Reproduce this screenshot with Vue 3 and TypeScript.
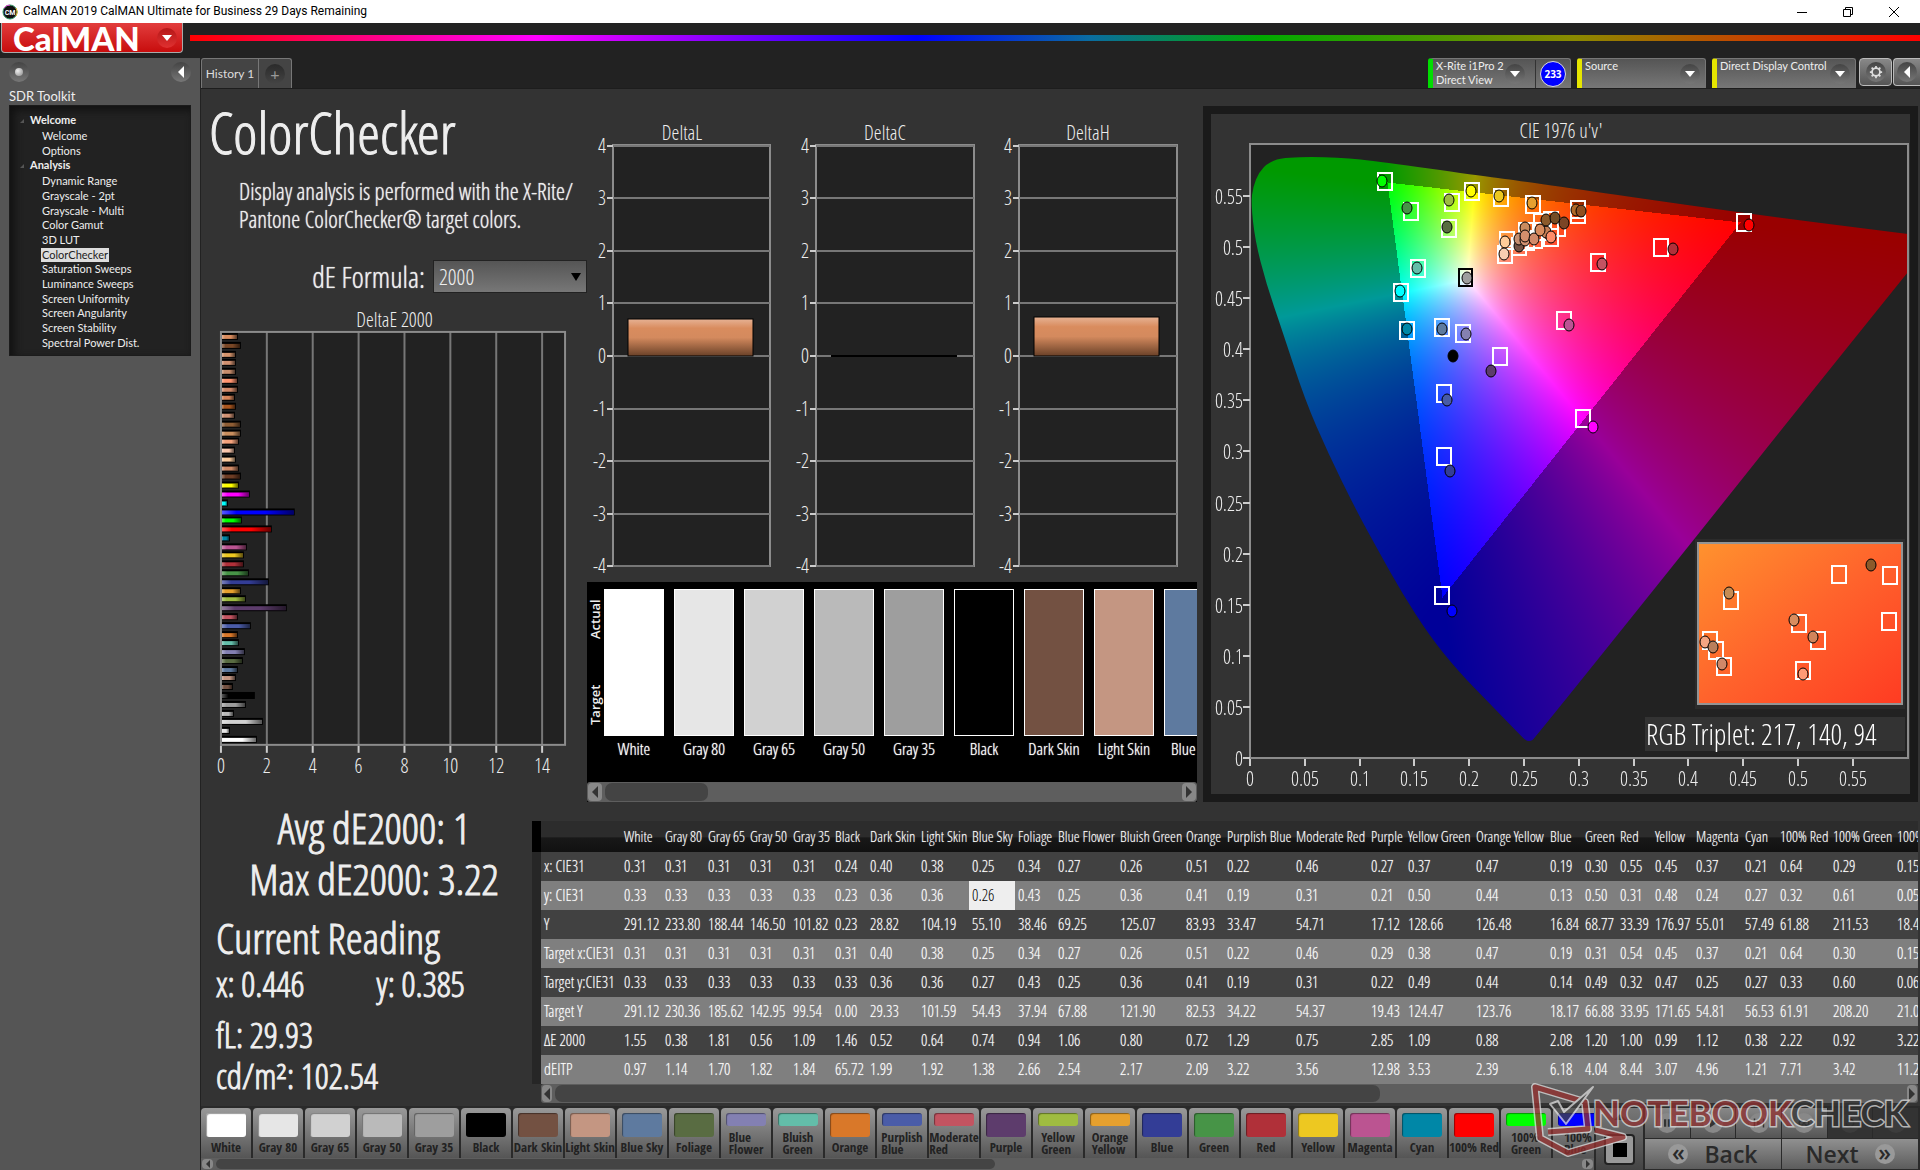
<script setup lang="ts">
import { onMounted, ref } from 'vue'

interface Patch { name: string; color: string }
interface Node { name: string; active?: boolean }
type Point = [number, number]
type Dot = [number, number, string]

const tree: { title: string; items: Node[] }[] = [
  { title: 'Welcome', items: [{ name: 'Welcome' }, { name: 'Options' }] },
  {
    title: 'Analysis',
    items: [
      { name: 'Dynamic Range' }, { name: 'Grayscale - 2pt' }, { name: 'Grayscale - Multi' }, { name: 'Color Gamut' },
      { name: '3D LUT' }, { name: 'ColorChecker', active: true }, { name: 'Saturation Sweeps' }, { name: 'Luminance Sweeps' },
      { name: 'Screen Uniformity' }, { name: 'Screen Angularity' }, { name: 'Screen Stability' }, { name: 'Spectral Power Dist.' },
    ],
  },
]

const patches: Patch[] = [
  { name: 'White', color: '#ffffff' }, { name: 'Gray 80', color: '#e6e6e6' }, { name: 'Gray 65', color: '#d1d1d1' },
  { name: 'Gray 50', color: '#bababa' }, { name: 'Gray 35', color: '#9e9e9e' }, { name: 'Black', color: '#000000' },
  { name: 'Dark Skin', color: '#735142' }, { name: 'Light Skin', color: '#c49682' }, { name: 'Blue Sky', color: '#5e7a9f' },
  { name: 'Foliage', color: '#596c42' }, { name: 'Blue Flower', color: '#8380b2' }, { name: 'Bluish Green', color: '#63bda9' },
  { name: 'Orange', color: '#d97829' }, { name: 'Purplish Blue', color: '#4a5ca8' }, { name: 'Moderate Red', color: '#c35461' },
  { name: 'Purple', color: '#5d3c6c' }, { name: 'Yellow Green', color: '#9fbc41' }, { name: 'Orange Yellow', color: '#e6a02e' },
  { name: 'Blue', color: '#333d96' }, { name: 'Green', color: '#479447' }, { name: 'Red', color: '#b03039' },
  { name: 'Yellow', color: '#edc821' }, { name: 'Magenta', color: '#bb5491' }, { name: 'Cyan', color: '#0087a7' },
  { name: '100% Red', color: '#ff0000' }, { name: '100% Green', color: '#00ff00' }, { name: '100% Blue', color: '#0000ff' },
]
const twoLine = new Set(['Blue Flower', 'Bluish Green', 'Purplish Blue', 'Moderate Red', 'Yellow Green', 'Orange Yellow', '100% Green', '100% Blue'])

const colWidths = [41, 43, 42, 43, 42, 35, 51, 51, 46, 40, 62, 66, 41, 69, 75, 37, 68, 74, 35, 35, 35, 41, 49, 35, 53, 64, 60]
const rows = [
  ['x: CIE31', '0.31 0.31 0.31 0.31 0.31 0.24 0.40 0.38 0.25 0.34 0.27 0.26 0.51 0.22 0.46 0.27 0.37 0.47 0.19 0.30 0.55 0.45 0.37 0.21 0.64 0.29 0.15'],
  ['y: CIE31', '0.33 0.33 0.33 0.33 0.33 0.23 0.36 0.36 0.26 0.43 0.25 0.36 0.41 0.19 0.31 0.21 0.50 0.44 0.13 0.50 0.31 0.48 0.24 0.27 0.32 0.61 0.05'],
  ['Y', '291.12 233.80 188.44 146.50 101.82 0.23 28.82 104.19 55.10 38.46 69.25 125.07 83.93 33.47 54.71 17.12 128.66 126.48 16.84 68.77 33.39 176.97 55.01 57.49 61.88 211.53 18.4'],
  ['Target x:CIE31', '0.31 0.31 0.31 0.31 0.31 0.31 0.40 0.38 0.25 0.34 0.27 0.26 0.51 0.22 0.46 0.29 0.38 0.47 0.19 0.31 0.54 0.45 0.37 0.21 0.64 0.30 0.15'],
  ['Target y:CIE31', '0.33 0.33 0.33 0.33 0.33 0.33 0.36 0.36 0.27 0.43 0.25 0.36 0.41 0.19 0.31 0.22 0.49 0.44 0.14 0.49 0.32 0.47 0.25 0.27 0.33 0.60 0.06'],
  ['Target Y', '291.12 230.36 185.62 142.95 99.54 0.00 29.33 101.59 54.43 37.94 67.88 121.90 82.53 34.22 54.37 19.43 124.47 123.76 18.17 66.88 33.95 171.65 54.81 56.53 61.91 208.20 21.0'],
  ['ΔE 2000', '1.55 0.38 1.81 0.56 1.09 1.46 0.52 0.64 0.74 0.94 1.06 0.80 0.72 1.29 0.75 2.85 1.09 0.88 2.08 1.20 1.00 0.99 1.12 0.38 2.22 0.92 3.22'],
  ['dEITP', '0.97 1.14 1.70 1.82 1.84 65.72 1.99 1.92 1.38 2.66 2.54 2.17 2.09 3.22 3.56 12.98 3.53 2.39 6.18 4.04 8.44 3.07 4.96 1.21 7.71 3.42 11.2'],
].map(([label, values]) => ({ label, values: values.split(' ') }))

const skinBars: [string, number][] = [
  ['#d98c5e', 0.74], ['#7a4726', 0.87], ['#d5946c', 0.65], ['#d09070', 0.65], ['#c68c6c', 0.65], ['#ff9470', 0.74],
  ['#d28a6a', 0.74], ['#d6855a', 0.61], ['#a8551e', 0.65], ['#d09274', 0.61], ['#8f5d34', 0.87], ['#c98e5e', 0.87],
  ['#f4a27c', 0.78], ['#f9c6ac', 0.61], ['#fbcb9d', 0.65], ['#cf8a66', 0.78], ['#6e3d24', 0.87],
  ['#ffff00', 0.78], ['#ff00ff', 1.26], ['#00ffff', 0.3],
]
const deBars = [
  ...skinBars,
  ...patches.map((p, i): [string, number] => [p.color, Number(rows[6].values[i])]).reverse(),
].map(([color, value], i) => ({ color, y: Math.round(30 + i * 8.78), w: Math.round(value * 23) }))

const deltas = [
  { name: 'DeltaL', x: 26, w: 157, value: 0.71 },
  { name: 'DeltaC', x: 229, w: 158, value: 0 },
  { name: 'DeltaH', x: 432, w: 158, value: 0.75 },
]
const levels = [4, 3, 2, 1, 0, -1, -2, -3, -4]
const levelY = (v: number) => Math.round(234 - v * 52.6)

const uTicks = ['0', '0.05', '0.1', '0.15', '0.2', '0.25', '0.3', '0.35', '0.4', '0.45', '0.5', '0.55']
const tickX = (i: number) => Math.round(1250 + i * 54.8)
const tickY = (i: number) => Math.round(758 - i * 51.1)

const targets: Point[] = [
  [1385, 181], [1411, 211], [1452, 202], [1472, 191], [1501, 197], [1533, 204], [1578, 209], [1578, 214], [1744, 222],
  [1449, 228], [1418, 268], [1401, 292], [1407, 330], [1442, 327], [1463, 333], [1661, 247], [1598, 262], [1564, 320],
  [1500, 356], [1444, 393], [1583, 418], [1444, 456], [1442, 595], [1507, 240], [1505, 254], [1526, 231], [1519, 246],
  [1541, 222], [1551, 220], [1558, 227], [1535, 239], [1551, 237], [1527, 241], [1542, 231],
]
const readings: Dot[] = [
  [1382, 181, '#00ff00'], [1407, 208, '#469346'], [1449, 200, '#9dbc40'], [1471, 191, '#ffff00'], [1499, 196, '#ecc820'],
  [1532, 203, '#e6a02f'], [1576, 210, '#b06a28'], [1581, 211, '#8f5020'], [1749, 225, '#ff0000'], [1447, 227, '#586c41'],
  [1417, 268, '#64bea9'], [1400, 291, '#00ffff'], [1467, 278, '#9e9e9e'], [1407, 329, '#0088a8'], [1442, 329, '#5e7b9e'],
  [1466, 334, '#8580b1'], [1453, 356, '#000000'], [1491, 371, '#5d3c6c'], [1673, 249, '#b03039'], [1602, 264, '#c35362'],
  [1569, 325, '#bb5494'], [1447, 400, '#485ba7'], [1593, 427, '#ff00ff'], [1450, 471, '#343d96'], [1452, 611, '#0000ff'],
  [1505, 242, '#ffcc99'], [1504, 254, '#f9ceb0'], [1525, 228, '#c98b5e'], [1519, 246, '#735244'], [1519, 239, '#c68f70'],
  [1525, 240, '#d09070'], [1525, 236, '#d58f6c'], [1534, 239, '#d28a6a'], [1546, 232, '#c67f55'], [1540, 230, '#d98c5e'],
  [1551, 237, '#ff8c69'], [1546, 220, '#8b5a2b'], [1555, 218, '#734d26'], [1564, 223, '#7b4526'],
]
const insetTargets: Point[] = [
  [1839, 574], [1890, 575], [1731, 600], [1799, 623], [1889, 621], [1710, 640], [1818, 640], [1716, 650], [1724, 666], [1803, 670],
]
const insetReadings: Dot[] = [
  [1871, 565, '#8b5a2b'], [1729, 593, '#c68c53'], [1794, 620, '#d98c5e'], [1705, 642, '#f4a582'],
  [1813, 637, '#d2845b'], [1713, 647, '#b97f5c'], [1722, 664, '#d08868'], [1803, 674, '#ff9a76'],
]

/* Spectral locus outline, relative to the plot's top left corner */
const locus: Point[] = [
  [88, 13], [133, 18], [225, 31], [271, 37], [492, 69], [658, 90], [658, 128], [555, 256], [446, 393], [284, 595],
  [281, 597], [277, 597], [273, 594], [244, 564], [207, 526], [179, 491], [152, 449], [129, 408], [106, 366], [78, 309],
  [55, 256], [32, 186], [16, 139], [5, 96], [1, 59], [3, 43], [9, 28], [19, 18], [35, 13],
]

const plot = ref<HTMLCanvasElement | null>(null)

function side(p: Point, a: Point, b: Point): number {
  return (p[0] - b[0]) * (a[1] - b[1]) - (a[0] - b[0]) * (p[1] - b[1])
}

onMounted(() => {
  const canvas = plot.value
  const ctx = canvas?.getContext('2d')
  if (!canvas || !ctx) return
  const { width, height } = canvas
  const layer = document.createElement('canvas')
  layer.width = width
  layer.height = height
  const layerCtx = layer.getContext('2d')
  if (!layerCtx) return
  const image = layerCtx.createImageData(width, height)
  const red: Point = [490, 78]
  const green: Point = [137, 38]
  const blue: Point = [192, 453]
  for (let py = 0; py < height; py++) {
    for (let px = 0; px < width; px++) {
      const u = px / 1096
      const v = Math.max((614 - py) / 1022, 0.001)
      const X = (9 * u) / (4 * v)
      const Z = (12 - 3 * u - 20 * v) / (4 * v)
      const r = Math.max(0, 3.2406 * X - 1.5372 - 0.4986 * Z)
      const g = Math.max(0, -0.9689 * X + 1.8758 + 0.0415 * Z)
      const b = Math.max(0, 0.0557 * X - 0.204 + 1.057 * Z)
      const top = Math.max(r, g, b, 0.0001)
      const p: Point = [px, py]
      const s1 = side(p, red, green)
      const s2 = side(p, green, blue)
      const s3 = side(p, blue, red)
      const inside = (s1 <= 0 && s2 <= 0 && s3 <= 0) || (s1 >= 0 && s2 >= 0 && s3 >= 0)
      const k = (inside ? 255 : 153) / top
      const at = (py * width + px) * 4
      image.data[at] = r * k
      image.data[at + 1] = g * k
      image.data[at + 2] = b * k
      image.data[at + 3] = 255
    }
  }
  layerCtx.putImageData(image, 0, 0)
  ctx.beginPath()
  const n = locus.length
  ctx.moveTo((locus[n - 1][0] + locus[0][0]) / 2, 13)
  locus.forEach((p, i) => {
    const next = locus[(i + 1) % n]
    if (p[0] > 600) ctx.lineTo(p[0], p[1])
    else ctx.quadraticCurveTo(p[0], p[1], (p[0] + next[0]) / 2, (p[1] + next[1]) / 2)
  })
  ctx.closePath()
  ctx.clip()
  ctx.drawImage(layer, 0, 0)
})
</script>

<template>
  <div class="app">
    <header class="titlebar">
      <svg class="app-icon" viewBox="0 0 16 16" aria-hidden="true">
        <circle cx="8" cy="8" r="7" fill="#111" stroke="#3a9b6b" />
        <path d="M2 4a7 7 0 0 1 6-3" stroke="#e04ad0" fill="none" /><path d="M14 4a7 7 0 0 1 0 8" stroke="#e0b030" fill="none" />
        <text x="8" y="11" text-anchor="middle" font-size="7" font-weight="700" fill="#fff">CM</text>
      </svg>
      <span class="title">CalMAN 2019 CalMAN Ultimate for Business 29 Days Remaining</span>
      <div class="window-buttons">
        <button aria-label="Minimize"><svg viewBox="0 0 12 12"><path d="M1 6.5h10" /></svg></button>
        <button aria-label="Restore"><svg viewBox="0 0 12 12"><path d="M1.500 3.500h7v7h-7zM3.500 3.500v-2h7v7h-2" /></svg></button>
        <button aria-label="Close"><svg viewBox="0 0 12 12"><path d="M1 1l10 10M11 1L1 11" /></svg></button>
      </div>
    </header>

    <div class="brandbar">
      <button class="brand">CalMAN<span class="knob red"><svg viewBox="0 0 10 6"><path d="M0 0h10L5 6z" /></svg></span></button>
      <div class="rainbow"></div>
    </div>

    <div class="body">
      <aside class="sidebar">
        <div class="side-top">
          <span class="knob"><i class="ball"></i></span>
          <button class="knob" aria-label="Collapse"><svg class="left" viewBox="0 0 6 12"><path d="M6 0v12L0 6z" /></svg></button>
        </div>
        <h2>SDR Toolkit</h2>
        <nav class="tree">
          <section v-for="group in tree" :key="group.title">
            <h3>{{ group.title }}</h3>
            <ul>
              <li v-for="item in group.items" :key="item.name"><a href="#" :class="{ active: item.active }">{{ item.name }}</a></li>
            </ul>
          </section>
        </nav>
      </aside>

      <main class="main">
        <div class="tabbar">
          <button class="tab">History 1</button>
          <button class="tab add" aria-label="Add tab"><span class="knob dark">+</span></button>
          <div class="devices">
            <div class="device meter">
              <span class="device-name">X-Rite i1Pro 2<br>Direct View</span>
              <button class="knob" aria-label="Meter menu"><svg viewBox="0 0 10 6"><path d="M0 0h10L5 6z" /></svg></button>
              <span class="count"><b>233</b></span>
            </div>
            <div class="device source">
              <span class="device-name">Source</span>
              <button class="knob" aria-label="Source menu"><svg viewBox="0 0 10 6"><path d="M0 0h10L5 6z" /></svg></button>
            </div>
            <div class="device display">
              <span class="device-name">Direct Display Control</span>
              <button class="knob" aria-label="Display menu"><svg viewBox="0 0 10 6"><path d="M0 0h10L5 6z" /></svg></button>
            </div>
            <button class="square" aria-label="Settings">
              <span class="knob"><svg class="gear" viewBox="0 0 16 16"><circle cx="8" cy="8" r="4.500" /><path d="M8 1v2.500M8 12.500V15M1 8h2.500M12.500 8H15M3 3l2 2M11 11l2 2M13 3l-2 2M5 11l-2 2" /></svg></span>
            </button>
            <button class="square last" aria-label="Hide"><span class="knob"><svg class="left" viewBox="0 0 6 12"><path d="M6 0v12L0 6z" /></svg></span></button>
          </div>
        </div>

        <div class="workspace">
          <div class="upper">
            <section class="intro">
              <h1>ColorChecker</h1>
              <p>Display analysis is performed with the X-Rite/<br>Pantone ColorChecker® target colors.</p>
              <div class="formula">
                <label for="formula">dE Formula:</label>
                <select id="formula"><option>2000</option></select>
              </div>
              <svg class="chart" viewBox="0 0 387 476" role="img" aria-label="DeltaE 2000">
                <defs>
                  <linearGradient id="shine">
                    <stop offset="0" stop-color="#fff" stop-opacity=".35" /><stop offset=".2" stop-color="#fff" stop-opacity="0" />
                    <stop offset=".6" stop-color="#000" stop-opacity="0" /><stop offset="1" stop-color="#000" stop-opacity=".6" />
                  </linearGradient>
                </defs>
                <text x="194" y="23" class="axis mid">DeltaE 2000</text>
                <rect x="20" y="28" width="345" height="414" fill="#222" />
                <path v-for="i in 7" :key="i" :d="`M${20 + i * 46} 28v414`" class="grid" />
                <g v-for="(bar, i) in deBars" :key="i">
                  <rect x="20" :y="bar.y - 1" :width="bar.w" height="7" fill="#000" />
                  <rect x="21" :y="bar.y + 1" :width="Math.max(bar.w - 2, 1)" height="4" :fill="bar.color" />
                  <rect x="21" :y="bar.y + 1" :width="Math.max(bar.w - 2, 1)" height="4" fill="url(#shine)" />
                </g>
                <rect x="20" y="28" width="345" height="414" class="frame" />
                <g v-for="i in 8" :key="i">
                  <path :d="`M${20 + (i - 1) * 46} 443v7`" class="tick" />
                  <text :x="20 + (i - 1) * 46" y="470" class="axis mid">{{ (i - 1) * 2 }}</text>
                </g>
              </svg>
            </section>

            <section class="center">
              <svg class="chart" viewBox="0 0 610 455" role="img" aria-label="DeltaL, DeltaC and DeltaH">
                <defs>
                  <linearGradient id="skin" x2="0" y2="1">
                    <stop offset="0" stop-color="#e6b294" /><stop offset=".25" stop-color="#d98c5e" />
                    <stop offset=".5" stop-color="#d48a5e" /><stop offset="1" stop-color="#6a4128" />
                  </linearGradient>
                </defs>
                <g v-for="d in deltas" :key="d.name">
                  <text :x="d.x + 69" y="18" class="axis mid">{{ d.name }}</text>
                  <rect :x="d.x" y="23" :width="d.w" height="421" class="frame filled" />
                  <g v-for="v in levels" :key="v">
                    <path :d="`M${d.x} ${levelY(v)}h${d.w}`" class="grid" />
                    <path :d="`M${d.x - 6} ${levelY(v)}h6`" class="tick" />
                    <text :x="d.x - 7" :y="levelY(v) + 7" class="axis end">{{ v }}</text>
                  </g>
                  <rect v-if="d.value" :x="d.x + 15" :y="levelY(d.value)" width="125" :height="234 - levelY(d.value)" fill="url(#skin)" stroke="#000" />
                  <path v-else :d="`M${d.x + 15} 234h126`" stroke="#000" stroke-width="2" />
                </g>
              </svg>
              <div class="strip">
                <div class="strip-body">
                  <div class="strip-labels"><span>Actual</span><span>Target</span></div>
                  <figure v-for="p in patches.slice(0, 9)" :key="p.name">
                    <div class="tile" :style="{ backgroundColor: p.color }"></div>
                    <figcaption>{{ p.name }}</figcaption>
                  </figure>
                </div>
                <div class="scroll">
                  <button aria-label="Scroll left"><svg viewBox="0 0 6 12"><path d="M6 0v12L0 6z" /></svg></button>
                  <span class="thumb strip-thumb"></span>
                  <button aria-label="Scroll right"><svg viewBox="0 0 6 12"><path d="M0 0v12l6-6z" /></svg></button>
                </div>
              </div>
            </section>

            <section class="cie">
              <svg class="chart" viewBox="1211 114 699 680" role="img" aria-label="CIE 1976 u'v'">
                <defs>
                  <linearGradient id="zoomed" x2="1" y2="1">
                    <stop offset="0" stop-color="#ff922e" /><stop offset=".5" stop-color="#ff632c" /><stop offset="1" stop-color="#ff3b22" />
                  </linearGradient>
                </defs>
                <text x="1561" y="138" class="axis mid">CIE 1976 u'v'</text>
                <rect x="1250" y="144" width="658" height="614" fill="#222" />
                <foreignObject x="1250" y="144" width="658" height="614"><canvas ref="plot" width="658" height="614"></canvas></foreignObject>
                <rect x="1250" y="144" width="658" height="614" class="frame" />
                <g v-for="(t, i) in uTicks" :key="t">
                  <path :d="`M${tickX(i)} 759v7M1243 ${tickY(i)}h7`" class="tick" />
                  <text :x="tickX(i)" y="786" class="axis mid">{{ t }}</text>
                  <text x="1243" :y="tickY(i) + 8" class="axis end">{{ t }}</text>
                </g>
                <rect v-for="(t, i) in targets" :key="'t' + i" :x="t[0] - 7" :y="t[1] - 8" width="14" height="17" class="target" />
                <rect x="1459" y="269" width="13" height="17" class="target white-point" />
                <ellipse v-for="(r, i) in readings" :key="'r' + i" :cx="r[0]" :cy="r[1]" rx="5" ry="6" :fill="r[2]" class="reading" />
                <rect x="1695" y="539" width="210" height="170" fill="#2b2b2b" />
                <rect x="1698" y="543" width="204" height="161" fill="url(#zoomed)" stroke="#949494" stroke-width="2" />
                <rect v-for="(t, i) in insetTargets" :key="'it' + i" :x="t[0] - 7" :y="t[1] - 8" width="14" height="17" class="target" />
                <ellipse v-for="(r, i) in insetReadings" :key="'ir' + i" :cx="r[0]" :cy="r[1]" rx="5" ry="6" :fill="r[2]" class="reading" />
                <rect x="1645" y="717" width="260" height="34" fill="#333" />
                <text x="1646" y="745" class="triplet">RGB Triplet: 217, 140, 94</text>
              </svg>
            </section>
          </div>

          <div class="lower">
            <section class="stats">
              <div class="big center-text">Avg dE2000: 1</div>
              <div class="big center-text">Max dE2000: 3.22</div>
              <div class="big current">Current Reading</div>
              <div class="med pair"><span>x: 0.446</span><span>y: 0.385</span></div>
              <div class="med fl">fL: 29.93</div>
              <div class="med">cd/m²: 102.54</div>
            </section>
            <section class="data">
              <div class="table-wrap">
                <table>
                  <colgroup>
                    <col class="gutter-col"><col class="label-col">
                    <col v-for="(w, i) in colWidths" :key="i" :style="{ width: w + 'px' }">
                  </colgroup>
                  <thead>
                    <tr><th class="gutter"></th><th></th><th v-for="p in patches" :key="p.name" scope="col">{{ p.name }}</th></tr>
                  </thead>
                  <tbody>
                    <tr v-for="(row, ri) in rows" :key="row.label">
                      <td class="gutter"></td>
                      <th scope="row">{{ row.label }}</th>
                      <td v-for="(v, ci) in row.values" :key="ci" :class="{ selected: ri === 1 && ci === 8 }">{{ v }}</td>
                    </tr>
                  </tbody>
                </table>
              </div>
              <div class="scroll table-scroll">
                <button aria-label="Scroll left"><svg viewBox="0 0 6 12"><path d="M6 0v12L0 6z" /></svg></button>
                <span class="thumb table-thumb"></span>
                <button aria-label="Scroll right"><svg viewBox="0 0 6 12"><path d="M0 0v12l6-6z" /></svg></button>
              </div>
            </section>
          </div>
        </div>

        <footer class="dock">
          <div class="palette">
            <div class="palette-row">
              <button v-for="p in patches" :key="p.name" class="patch">
                <span class="chip" :style="{ backgroundColor: p.color }"></span>
                <span class="patch-name" :class="{ two: twoLine.has(p.name) }">{{ p.name }}</span>
              </button>
            </div>
            <div class="scroll thin">
              <button aria-label="Scroll left"><svg viewBox="0 0 6 12"><path d="M6 0v12L0 6z" /></svg></button>
              <span class="thumb palette-thumb"></span>
              <button aria-label="Scroll right"><svg viewBox="0 0 6 12"><path d="M0 0v12l6-6z" /></svg></button>
            </div>
          </div>
          <div class="stop-cell">
            <svg class="up" viewBox="0 0 12 6"><path d="M0 6h12L6 0z" /></svg>
            <button class="stop" aria-label="Stop"><i></i></button>
          </div>
          <div class="controls">
            <div class="transport">
              <button aria-label="Pause"><span><svg viewBox="0 0 16 16"><path d="M4 3h3v10H4zM9 3h3v10H9z" /></svg></span></button>
              <button aria-label="Play"><span><svg viewBox="0 0 16 16"><path d="M4 2l9 6-9 6z" /></svg></span></button>
              <button aria-label="Read series"><span><svg viewBox="0 0 16 16"><path d="M1 2h2v12H1zM13 2h2v12h-2zM5 4l6 4-6 4z" /></svg></span></button>
              <button aria-label="Read continuously"><span><svg viewBox="0 0 16 16"><path d="M4.500 5a3 3 0 1 0 0 6c2.500 0 4.500-6 7-6a3 3 0 1 1 0 6c-2.500 0-4.500-6-7-6z" fill="none" stroke="#333" stroke-width="2" /></svg></span></button>
              <button class="off" aria-label="Refresh"><span><svg viewBox="0 0 16 16"><path d="M3 8a5 5 0 1 0 2-4" fill="none" stroke="#222" stroke-width="2" /></svg></span></button>
              <button class="off" aria-label="Record"><span></span></button>
            </div>
            <div class="steps">
              <button><span class="chev">«</span>Back</button>
              <button>Next<span class="chev">»</span></button>
            </div>
          </div>
          <svg class="watermark" viewBox="0 0 385 80" aria-label="NotebookCheck">
            <g fill="none" stroke-linejoin="round">
              <path d="M15 50l40-3-3-27L2 5l5 51 28 15 55-16-28-7" stroke="#ddd" stroke-width="8" />
              <path d="M15 50l40-3-3-27L2 5l5 51 28 15 55-16-28-7" stroke="#96302f" stroke-width="5" />
              <path d="M17 22l8-3 6 11L60 5 33 42z" fill="#444" stroke="#ddd" stroke-width="2" />
            </g>
            <text x="60" y="44"><tspan fill="#8f3030">NOTEBOOK</tspan><tspan fill="#333">CHECK</tspan></text>
          </svg>
        </footer>
      </main>
    </div>
  </div>
</template>

<style>
body { margin: 0; background: #333; }
</style>

<style scoped>
.app {
  --narrow: "Open Sans Condensed Light", "Open Sans Condensed", "Open Sans", sans-serif;
  --ui: "Lato", sans-serif;
  display: flex;
  flex-direction: column;
  min-height: 100vh;
  overflow: hidden;
  background: #222;
  color: #eee;
  font-family: var(--ui);
  font-size: 13px;
}
.app *, .app *::before { box-sizing: border-box; }
button { margin: 0; padding: 0; border: 0; background: none; color: inherit; font: inherit; }
h1, h2, h3, p, ul, figure { margin: 0; padding: 0; font-weight: 400; list-style: none; }

.titlebar { display: flex; align-items: center; height: 23px; padding-left: 2px; background: #fff; color: #000; font: 12px/23px "Roboto", "Noto Sans", sans-serif; }
.app-icon { width: 16px; height: 16px; margin-right: 5px; }
.title { flex: 1; white-space: nowrap; }
.window-buttons { display: flex; gap: 34px; padding-right: 20px; }
.window-buttons button { display: flex; width: 12px; }
.window-buttons svg { width: 12px; height: 12px; fill: none; stroke: #000; }

.brandbar { display: flex; height: 35px; background: #222; }
.brand { display: flex; align-items: center; justify-content: space-between; width: 182px; height: 30px; margin-left: 1px; padding: 0 5px 0 11px; border: 1px solid #aaa; border-top: 0; border-radius: 0 0 4px 4px; background: linear-gradient(#e23d3d, #c80d0d); color: #fff; font: 900 33px/28px "Lato", sans-serif; }
.rainbow { flex: 1; height: 6px; margin: 12px 0 0 7px; background: linear-gradient(90deg, #f00, #f0f 20%, #00f 42%, #0a6ca0 52%, #0a0 62%, #8a8a00 80%, #f00); }

.knob { display: flex; flex: none; align-items: center; justify-content: center; width: 20px; height: 20px; border-radius: 50%; background: linear-gradient(#444, #777); }
.knob svg { width: 10px; height: 6px; fill: #fff; }
.knob svg.left { width: 6px; height: 12px; }
.knob svg.gear { width: 14px; height: 14px; fill: none; stroke: #ddd; stroke-width: 2; }
.knob.red { background: linear-gradient(#b51818, #e03030); }
.knob.dark { background: linear-gradient(#2a2a2a, #444); color: #999; font-size: 16px; }
.ball { width: 8px; height: 8px; border-radius: 50%; background: radial-gradient(circle at 35% 35%, #eee, #888); }

.body { display: flex; flex: 1; }
.sidebar { flex: none; width: 200px; padding: 4px 9px 0; background: #555; }
.side-top { display: flex; justify-content: space-between; height: 24px; }
.sidebar h2 { height: 19px; font-size: 13px; line-height: 20px; }
.tree { display: flex; flex-direction: column; height: 251px; padding: 6px 0 0 20px; border: 1px solid #1b1b1b; background: #222; box-shadow: inset 4px 4px 8px #111; font-size: 11px; }
.tree h3 { position: relative; height: 16px; font-size: 11px; font-weight: 700; line-height: 16px; }
.tree h3::before { content: ""; position: absolute; left: -10px; top: 7px; border: 2px solid #555; border-top-color: transparent; border-left-color: transparent; }
.tree ul { padding-left: 11px; }
.tree li { height: 15px; line-height: 15px; }
.tree section:first-child li:last-child, .tree section:last-child li:nth-child(3n) { height: 14px; }
.tree a { display: inline-block; padding: 0 1px; color: #eee; line-height: 14px; text-decoration: none; }
.tree a.active { background: #ddd; color: #222; }

.main { display: flex; flex: 1; flex-direction: column; min-width: 0; border-left: 1px solid #222; }
.tabbar { display: flex; height: 31px; background: #222; border-bottom: 1px solid #1d1d1d; }
.tab { width: 58px; border: 1px solid #777; border-bottom: 0; border-radius: 3px 0 0 0; background: #444; color: #ddd; font-size: 12px; white-space: nowrap; }
.tab.add { display: flex; align-items: center; justify-content: center; width: 34px; margin-left: -1px; border-radius: 0 3px 0 0; }
.devices { display: flex; gap: 6px; margin-left: auto; }
.device { display: flex; align-items: center; height: 30px; border: 1px solid #777; border-bottom: 0; border-left: 5px solid #e6e600; border-radius: 3px 3px 0 0; background: linear-gradient(#555, #777); }
.device .knob { margin-right: 5px; }
.device-name { flex: 1; align-self: flex-start; padding-left: 3px; font-size: 11px; line-height: 14px; white-space: nowrap; }
.meter { width: 143px; border-left-color: #0d0; }
.meter .knob { margin-right: 10px; }
.source { width: 129px; }
.display { width: 144px; }
.count { display: flex; align-items: center; justify-content: center; width: 35px; height: 28px; border-left: 1px solid #333; }
.count b { width: 26px; height: 26px; border: 1px solid #ddd; border-radius: 50%; background: #00f; color: #fff; font: 700 10px/24px "Open Sans", sans-serif; text-align: center; }
.square { display: flex; align-items: center; justify-content: center; width: 33px; height: 28px; margin-left: -3px; border: 1px solid #bbb; border-radius: 4px; background: linear-gradient(#888, #555); }
.square.last { width: 27px; margin-left: -5px; border-right: 0; border-radius: 4px 0 0 4px; }

.workspace { display: flex; flex: 1; flex-direction: column; background: #333; }
.upper { display: grid; grid-template-columns: minmax(0, 386fr) minmax(0, 616fr) minmax(0, 715fr); padding-right: 2px; }
.chart { display: block; width: 100%; height: auto; overflow: visible; }
.chart text { font-family: var(--narrow); }
.axis { fill: #eee; font-size: 20px; }
.mid { text-anchor: middle; }
.end { text-anchor: end; }
.frame { fill: none; stroke: #8c8c8c; stroke-width: 2; }
.frame.filled { fill: #222; }
.grid { stroke: #777; stroke-width: 2; }
.tick { stroke: #ccc; stroke-width: 2; }
.target { fill: none; stroke: #fff; stroke-width: 2; }
.white-point { stroke: #000; }
.reading { stroke: #000; stroke-width: 1; }
.chart .triplet { fill: #fff; font-size: 29px; }
canvas { display: block; }

.intro h1 { height: 60px; margin: 13px 0 0 8px; font: 58px/60px var(--narrow); -webkit-text-stroke: 1px; }
.intro p { margin: 15px 0 0 38px; font: 23px/28px var(--narrow); text-shadow: 0 0 1px #eee; white-space: nowrap; }
.formula { position: relative; display: flex; align-items: center; justify-content: flex-end; gap: 8px; height: 32px; margin-top: 27px; font-family: var(--narrow); text-shadow: 0 0 1px #eee; }
.formula label { font-size: 29px; }
.formula select { width: 154px; height: 33px; padding: 0 5px; border: 1px solid #222; border-radius: 0; appearance: none; background: linear-gradient(#555, #777); color: #eee; font: 22px/30px var(--narrow); }
.formula::after { content: ""; position: absolute; right: 6px; top: 13px; border: 5px solid transparent; border-top: 8px solid #000; border-bottom: 0; }
.intro .chart { margin-top: 12px; }

.center { padding: 33px 6px 0 0; }
.strip { margin-top: 5px; background: #000; }
.strip-body { display: flex; gap: 10px; height: 200px; padding: 7px 0 0; overflow: hidden; }
.strip-labels { display: flex; flex: none; flex-direction: row-reverse; justify-content: space-between; width: 17px; height: 146px; margin-right: -10px; padding: 10px 0; font: 600 13px/17px "Open Sans", sans-serif; writing-mode: vertical-rl; transform: rotate(180deg); }
.strip figure { flex: none; width: 60px; text-align: center; }
.tile { height: 147px; border: 1px solid #fff; }
.strip figcaption { margin: 3px -6px 0; color: #fff; font: 17px/20px var(--narrow); text-shadow: 0 0 1px #fff; white-space: nowrap; }

.scroll { display: flex; align-items: center; height: 20px; padding: 1px; border-radius: 3px; background: #5e5e5e; }
.scroll button { display: flex; flex: none; align-items: center; justify-content: center; width: 14px; height: 100%; border-radius: 4px; background: #888; }
.scroll button:last-child { margin-left: auto; }
.scroll svg { width: 6px; height: 12px; fill: #333; }
.thumb { height: 100%; margin-left: 3px; border-radius: 7px; background: #444; }
.strip-thumb { width: 17%; }
.table-scroll { height: 19px; margin-left: 9px; }
.table-scroll button { width: 10px; }
.table-thumb { width: 60%; }
.scroll.thin { height: 12px; border-radius: 0; }
.scroll.thin button { width: 11px; }
.scroll.thin svg { height: 8px; }
.palette-thumb { width: 56%; }

.cie { align-self: start; margin-top: 17px; border: 8px solid #1a1a1a; background: #333; }

.lower { display: flex; margin-top: 19px; padding-right: 2px; }
.stats { flex: none; width: 331px; margin-top: -19px; padding-left: 15px; font-family: var(--narrow); white-space: nowrap; -webkit-text-stroke: 1px; }
.big { height: 51px; font-size: 43px; line-height: 51px; }
.center-text { text-align: center; }
.current { margin-top: 8px; }
.med { height: 41px; font-size: 35px; line-height: 41px; }
.pair { display: flex; gap: 72px; }
.fl { margin-top: 10px; }
.data { flex: 1; min-width: 0; }
.table-wrap { overflow: hidden; }
table { width: 1422px; border-collapse: collapse; table-layout: fixed; color: #fff; font-family: var(--narrow); font-size: 16px; text-shadow: 0 0 1px #fff8; }
.gutter-col { width: 9px; }
.label-col { width: 80px; }
th, td { height: 29px; padding: 0 0 0 3px; overflow: visible; font-weight: inherit; line-height: 29px; text-align: left; white-space: nowrap; }
thead th { height: 31px; background: linear-gradient(#2c2c2c 50%, #181818 55%, #111); font-size: 15px; line-height: 31px; }
thead th.gutter { background: #000; }
tbody tr:nth-child(odd) { background: #414141; }
tbody tr:nth-child(even) { background: #7f7f7f; }
td.gutter { background: #262626; }
td.selected { background: #eee; color: #000; text-shadow: none; }

.dock { position: relative; display: flex; gap: 2px; height: 64px; padding: 2px 2px 0 0; background: #2a2a2a; }
.palette { flex: 1; min-width: 0; overflow: hidden; }
.palette-row { display: flex; gap: 2px; height: 50px; overflow: hidden; }
.patch { display: flex; flex: none; flex-direction: column; align-items: center; width: 50px; height: 50px; padding-top: 5px; border-radius: 4px 4px 0 0; background: linear-gradient(#999, #555); color: #222; }
.chip { flex: 1; width: 40px; border-radius: 3px; box-shadow: inset 1px 1px 1px #0006; }
.patch-name { height: 21px; font: 700 13px/21px "Open Sans Condensed", sans-serif; white-space: nowrap; }
.patch-name.two { width: min-content; height: 32px; padding-top: 5px; line-height: 12px; text-align: left; white-space: normal; }
.stop-cell { display: flex; flex: none; flex-direction: column; align-items: center; justify-content: space-between; width: 47px; padding: 6px 0 5px; background: linear-gradient(#777, #444); }
.up { width: 12px; height: 6px; fill: #333; }
.stop { display: flex; align-items: center; justify-content: center; width: 31px; height: 31px; border: 2px solid #222; border-radius: 4px; background: #999; }
.stop i { width: 14px; height: 14px; background: #000; }
.controls { flex: none; width: 273px; }
.transport { display: grid; grid-template-columns: repeat(6, 1fr); gap: 1px; height: 30px; }
.transport button { display: flex; align-items: center; justify-content: center; background: linear-gradient(#888, #555); }
.transport span { display: flex; align-items: center; justify-content: center; width: 20px; height: 20px; border-radius: 50%; background: #888; }
.transport svg { width: 12px; height: 12px; fill: #333; }
.transport .off { background: #333; }
.transport .off span { background: #3c3c3c; }
.steps { display: grid; grid-template-columns: 1fr 1fr; gap: 1px; height: 30px; margin-top: 1px; }
.steps button { display: flex; align-items: center; justify-content: center; gap: 16px; background: linear-gradient(#909090, #5c5c5c); color: #2a2a2a; font: 600 23px/28px "Open Sans", sans-serif; }
.chev { width: 20px; height: 20px; border-radius: 50%; background: #999; line-height: 17px; text-align: center; }
.watermark { position: absolute; right: 2px; bottom: 8px; width: 385px; height: 80px; overflow: visible; opacity: 0.75; }
.watermark text { font: 700 35px "Lato", sans-serif; stroke: #ddd; stroke-width: 3px; paint-order: stroke; }
</style>
